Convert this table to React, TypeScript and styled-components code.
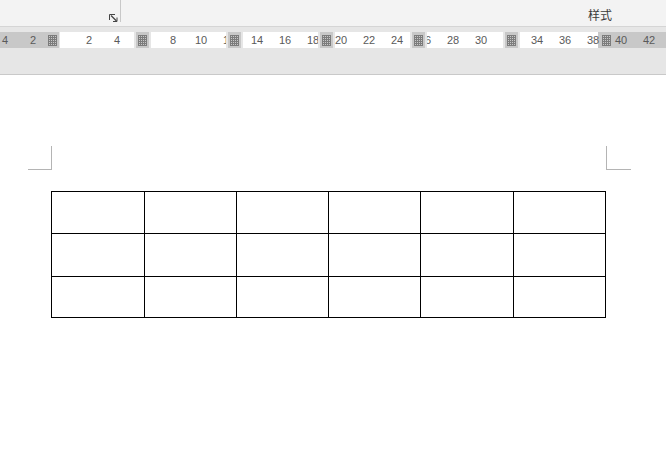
import React from "react";
import styled, { createGlobalStyle } from "styled-components";

const GlobalStyle = createGlobalStyle`
  html, body {
    margin: 0;
    padding: 0;
    background: #ffffff;
  }
  body {
    font-family: "Liberation Sans", "Noto Sans", Arial, sans-serif;
  }
`;

const Window = styled.div`
  width: 666px;
  height: 458px;
  overflow: hidden;
  display: flex;
  flex-direction: column;
  background: #ffffff;
`;

// ribbon bottom edge
const Ribbon = styled.div`
  height: 26px;
  flex-shrink: 0;
  display: flex;
  align-items: flex-start;
  background: #f3f3f3;
  border-bottom: 1px solid #d5d5d5;
`;

const Launcher = styled.svg`
  margin: 14px 0 0 109px;
  width: 9px;
  height: 8px;
  display: block;
`;

const GroupSeparator = styled.div`
  width: 1px;
  height: 22px;
  margin-left: 2px;
  background: #c8c8c8;
`;

const GroupLabel = styled.span`
  margin: 7px 54px 0 auto;
  font-family: "Noto Sans CJK SC", "Noto Sans", sans-serif;
  font-size: 12px;
  line-height: 16px;
  color: #3a3a3a;
`;

const RulerBar = styled.div`
  height: 48px;
  flex-shrink: 0;
  padding-top: 5px;
  box-sizing: border-box;
  background: #e6e6e6;
  border-bottom: 1px solid #c9c9c9;
`;

const RulerStrip = styled.div`
  position: relative;
  height: 16px;
  display: flex;
`;

const Margin = styled.div<{ $w: number }>`
  width: ${(p) => p.$w}px;
  flex-shrink: 0;
  background: #c8c8c8;
`;

const Gap = styled.div<{ $w: number }>`
  width: ${(p) => p.$w}px;
  flex-shrink: 0;
`;

const TextArea = styled.div`
  flex: 1;
  background: #ffffff;
`;

const Tick = styled.span`
  position: absolute;
  top: 1px;
  transform: translateX(-50%);
  font-size: 11px;
  line-height: 14px;
  color: #5a5a5a;
  white-space: nowrap;
`;

const ColumnMarker = styled.div<{ $bare?: boolean }>`
  position: absolute;
  top: 0;
  height: 16px;
  width: 13px;
  box-sizing: border-box;
  display: flex;
  align-items: center;
  justify-content: center;
  background: #c8c8c8;
  box-shadow: ${(p) => (p.$bare ? "none" : "0 0 0 2px #e6e6e6")};
`;

const Page = styled.div`
  flex: 1;
  background: #ffffff;
`;

const CornerRow = styled.div`
  display: flex;
  justify-content: space-between;
  margin-top: 71px;
  padding: 0 35px 0 28px;
`;

const Corner = styled.div<{ $side: "left" | "right" }>`
  width: ${(p) => (p.$side === "left" ? 24 : 25)}px;
  height: 24px;
  box-sizing: border-box;
  border-bottom: 1px solid #b4b4b4;
  ${(p) =>
    p.$side === "left"
      ? "border-right: 1px solid #b4b4b4;"
      : "border-left: 1px solid #b4b4b4;"}
`;

const Table = styled.table`
  margin: 21px 0 0 51px;
  border-collapse: collapse;
  table-layout: fixed;
`;

const Cell = styled.td<{ $w: number; $h: number }>`
  width: ${(p) => p.$w}px;
  height: ${(p) => p.$h}px;
  padding: 0;
  border: 1px solid #000000;
`;

const GridIcon: React.FC = () => (
  <svg width="9" height="11" viewBox="0 0 9 11">
    {[0, 2, 4, 6, 8].map((x) => (
      <rect key={"v" + x} x={x} y={0} width={1} height={11} fill="#7c7c7c" />
    ))}
    {[0, 2, 4, 6, 8, 10].map((y) => (
      <rect key={"h" + y} x={0} y={y} width={9} height={1} fill="#7c7c7c" />
    ))}
  </svg>
);

const ticks: { label: string; x: number }[] = [
  { label: "4", x: 5 },
  { label: "2", x: 33 },
];
for (let n = 2; n <= 42; n += 2) {
  ticks.push({ label: String(n), x: 61 + n * 14 });
}

const markers = [136, 228, 320, 412, 505];
const colWidths = [92, 91, 91, 91, 92, 91];
const rowHeights = [41, 42, 40];

const App: React.FC = () => {
  return (
    <Window>
      <GlobalStyle />
      <Ribbon>
        <Launcher viewBox="0 0 9 8">
          <path d="M0.5 6V0.5H6" fill="none" stroke="#444" strokeWidth="1" />
          <path d="M2 1.5L7.5 7" fill="none" stroke="#444" strokeWidth="1.2" />
          <path d="M8 3.5V7.5H4" fill="none" stroke="#444" strokeWidth="1" />
        </Launcher>
        <GroupSeparator />
        <GroupLabel>样式</GroupLabel>
      </Ribbon>
      <RulerBar>
        <RulerStrip>
          <Margin $w={58} />
          <Gap $w={2} />
          <TextArea />
          <Margin $w={68} />
          {ticks.map((t) => (
            <Tick key={t.label + t.x} style={{ left: t.x }}>
              {t.label}
            </Tick>
          ))}
          <ColumnMarker $bare style={{ left: 46 }}>
            <GridIcon />
          </ColumnMarker>
          {markers.map((x) => (
            <ColumnMarker key={x} style={{ left: x }}>
              <GridIcon />
            </ColumnMarker>
          ))}
          <ColumnMarker $bare style={{ left: 600 }}>
            <GridIcon />
          </ColumnMarker>
        </RulerStrip>
      </RulerBar>
      <Page>
        <CornerRow>
          <Corner $side="left" />
          <Corner $side="right" />
        </CornerRow>
        <Table>
          <tbody>
            {rowHeights.map((h, r) => (
              <tr key={r}>
                {colWidths.map((w, c) => (
                  <Cell key={c} $w={w} $h={h} />
                ))}
              </tr>
            ))}
          </tbody>
        </Table>
      </Page>
    </Window>
  );
};

export default App;
